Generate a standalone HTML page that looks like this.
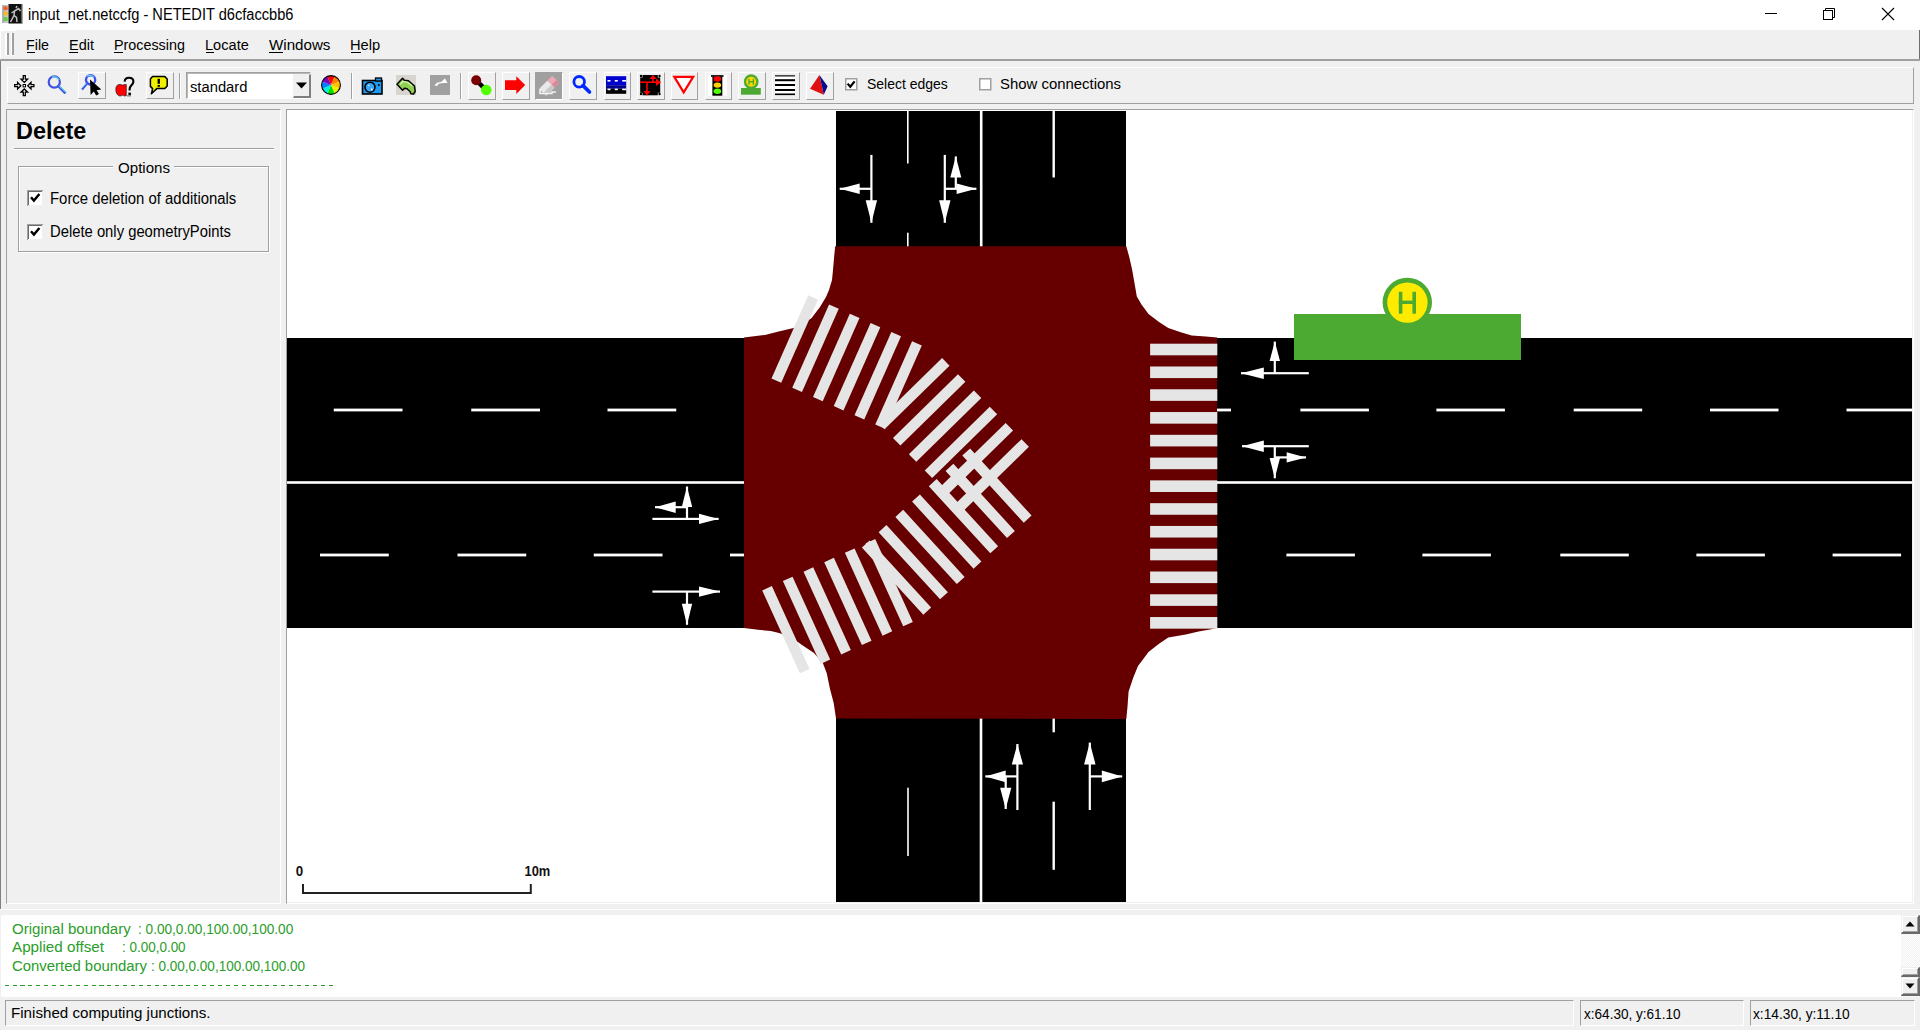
<!DOCTYPE html><html><head><meta charset="utf-8"><style>*{box-sizing:border-box}html,body{margin:0;padding:0}body{width:1920px;height:1030px;overflow:hidden;background:#f0f0f0;position:relative;font-family:"Liberation Sans", sans-serif;color:#000}.a{position:absolute}.t{position:absolute;white-space:pre;line-height:1}</style></head><body><div class="a" style="left:0px;top:0px;width:1920px;height:30px;background:#fff"></div><svg class="a" style="left:2px;top:3px;" width="21" height="21" viewBox="0 0 21 21"><rect x="0.5" y="2" width="6" height="18" fill="#c8c8c8"/><rect x="0.5" y="2" width="1" height="18" fill="#888"/><circle cx="3.6" cy="5.2" r="2.2" fill="#f0602a"/><circle cx="3.6" cy="10.6" r="2.2" fill="#f5b820"/><circle cx="3.6" cy="16" r="2.2" fill="#60d040"/><rect x="6.5" y="1" width="14" height="19.5" fill="#111"/><rect x="19.5" y="1" width="1.5" height="19.5" fill="#aaa"/><path d="M8.5 19 L12 12.5 L14.5 14.5 L15 19 M12 12.5 L12.5 8 L16.5 5.5 L18.5 8 M12.5 8 L9.5 10 M14 5 L15 3" stroke="#c0c0c0" stroke-width="1.5" fill="none"/></svg><div class="t" style="left:27.5px;top:6.59px;font-size:15.6px;height:15.6px;color:#000;font-weight:normal;transform-origin:0 0;transform:scaleX(0.9376);">input_net.netccfg - NETEDIT d6cfaccbb6</div><div class="a" style="left:1765px;top:13px;width:12px;height:1px;background:#000"></div><svg class="a" style="left:1820px;top:5px;" width="18" height="18" viewBox="0 0 18 18"><rect x="3.5" y="5.5" width="9" height="9" fill="none" stroke="#000" stroke-width="1"/><path d="M5.5 5.5 V3.5 H14.5 V12.5 H12.5" fill="none" stroke="#000" stroke-width="1"/></svg><svg class="a" style="left:1879px;top:5px;" width="18" height="18" viewBox="0 0 18 18"><path d="M3 3 L15 15 M15 3 L3 15" stroke="#000" stroke-width="1.1" fill="none"/></svg><div class="a" style="left:0px;top:59px;width:1px;height:850px;background:#808080"></div><div class="a" style="left:0px;top:30px;width:1px;height:29px;background:#fff"></div><div class="a" style="left:0px;top:30px;width:16px;height:1px;background:#fff"></div><div class="a" style="left:1919px;top:30px;width:1px;height:31px;background:#6d6d6d"></div><div class="a" style="left:0px;top:59px;width:1920px;height:2px;background:#a0a0a0"></div><div class="a" style="left:5px;top:33px;width:2px;height:23px;background:#fff"></div><div class="a" style="left:7px;top:33px;width:2px;height:23px;background:#a0a0a0"></div><div class="a" style="left:5px;top:55px;width:4px;height:1px;background:#fff"></div><div class="a" style="left:10.5px;top:33px;width:1.5px;height:23px;background:#fff"></div><div class="a" style="left:12px;top:33px;width:2px;height:23px;background:#a0a0a0"></div><div class="a" style="left:10.5px;top:55px;width:3.5px;height:1px;background:#fff"></div><div class="t" style="left:26px;top:37.12px;font-size:15.1px;height:15.1px;color:#000;font-weight:normal;transform-origin:0 0;transform:scaleX(0.9454);">File</div><div class="a" style="left:26.5px;top:52px;width:8.6px;height:1px;background:#000"></div><div class="t" style="left:68.75px;top:37.12px;font-size:15.1px;height:15.1px;color:#000;font-weight:normal;transform-origin:0 0;transform:scaleX(0.9610);">Edit</div><div class="a" style="left:69.25px;top:52px;width:9px;height:1px;background:#000"></div><div class="t" style="left:113.5px;top:37.12px;font-size:15.1px;height:15.1px;color:#000;font-weight:normal;transform-origin:0 0;transform:scaleX(0.9495);">Processing</div><div class="a" style="left:114px;top:52px;width:9.4px;height:1px;background:#000"></div><div class="t" style="left:205.2px;top:37.12px;font-size:15.1px;height:15.1px;color:#000;font-weight:normal;transform-origin:0 0;transform:scaleX(0.9663);">Locate</div><div class="a" style="left:205.7px;top:52px;width:8px;height:1px;background:#000"></div><div class="t" style="left:268.75px;top:37.12px;font-size:15.1px;height:15.1px;color:#000;font-weight:normal;transform-origin:0 0;transform:scaleX(1.0035);">Windows</div><div class="a" style="left:269.25px;top:52px;width:13.5px;height:1px;background:#000"></div><div class="t" style="left:350px;top:37.12px;font-size:15.1px;height:15.1px;color:#000;font-weight:normal;transform-origin:0 0;transform:scaleX(0.9727);">Help</div><div class="a" style="left:350.5px;top:52px;width:10.3px;height:1px;background:#000"></div><div class="a" style="left:7px;top:67px;width:1907px;height:37px;border-top:1px solid #fff;border-left:1px solid #fff;border-right:1px solid #a0a0a0;border-bottom:1px solid #a0a0a0"></div><svg class="a" style="left:14px;top:75px;" width="21" height="22" viewBox="0 0 21 22"><g fill="#fff" stroke="#000" stroke-width="1.3" stroke-linejoin="miter"><path d="M9.3 0.7 H11.3 V4.2 H13.6 L10.3 7.4 L7 4.2 H9.3 Z"/><path d="M9.3 20.7 H11.3 V17.2 H13.6 L10.3 14 L7 17.2 H9.3 Z"/><path d="M0.7 9.7 V11.7 H3.6 V14 L6.8 10.7 L3.6 7.4 V9.7 Z"/><path d="M19.9 9.7 V11.7 H17 V14 L13.8 10.7 L17 7.4 V9.7 Z"/></g><rect x="9.1" y="9.5" width="2.4" height="2.4" fill="#fff" stroke="#000" stroke-width="1"/></svg><svg class="a" style="left:46px;top:74px;" width="22" height="22" viewBox="0 0 22 22"><circle cx="8.3" cy="8" r="5.6" fill="#eee" stroke="#4050e0" stroke-width="2.2"/><path d="M6 3.2 A5.6 5.6 0 0 1 13 6" stroke="#60c8e8" stroke-width="1.6" fill="none"/><path d="M12.6 12.4 L19.5 19.3" stroke="#4050e0" stroke-width="2.6"/><path d="M13.4 12 L19.6 18.2" stroke="#60d0e8" stroke-width="1.2"/></svg><div class="a" style="left:78.3px;top:72.3px;width:27.5px;height:27.2px;border-top:1px solid #fff;border-left:1px solid #fff;border-right:1px solid #a0a0a0;border-bottom:1px solid #a0a0a0"></div><svg class="a" style="left:80px;top:74px;" width="24" height="24" viewBox="0 0 24 24"><circle cx="10.6" cy="5.9" r="4.6" fill="#f4f4f4" stroke="#4050e8" stroke-width="2.4"/><path d="M7 2.5 A4.6 4.6 0 0 1 14 3.5" stroke="#60c8f0" stroke-width="1.2" fill="none"/><path d="M7 9.6 L2 15.5" stroke="#4050e8" stroke-width="2.2"/><path d="M6.2 9.6 L1.6 14.6" stroke="#60c8f0" stroke-width="1"/><path d="M10 5.4 L10.6 21 L13.8 17.6 L16.2 21.5 L19 20 L16.6 16.2 L21.3 15.6 Z" fill="#000"/></svg><svg class="a" style="left:114px;top:76px;" width="22" height="22" viewBox="0 0 22 22"><path d="M4.5 8.6 C2.6 9.2 1.8 11 1.8 13.6 C1.8 17 3.6 20 6.2 20 C7.4 20 7.8 19.3 8.6 19.3 C9.4 19.3 9.8 20 11 20 C11.8 20 12.3 19.5 12.3 19.5 V8.6 C11.5 8.2 10.6 8.4 9.8 8.8 C9 9.2 8.2 9.2 7.4 8.8 C6.5 8.3 5.5 8.3 4.5 8.6 Z" fill="#f00" stroke="#222" stroke-width="0.7"/><path d="M10.6 5.6 C10.8 3.2 12.6 1.8 15 1.8 C17.6 1.8 19.4 3.4 19.4 5.7 C19.4 8.6 15.6 9.6 15.6 13.2 V14.6" stroke="#000" stroke-width="2.1" fill="none"/><rect x="14.4" y="16.6" width="2.5" height="2.6" fill="#000"/><rect x="13" y="19.4" width="4" height="1" fill="#666"/></svg><div class="a" style="left:145.6px;top:72.3px;width:28px;height:27.2px;border-top:1px solid #fff;border-left:1px solid #fff;border-right:1px solid #a0a0a0;border-bottom:1px solid #a0a0a0"></div><svg class="a" style="left:148px;top:74px;" width="22" height="22" viewBox="0 0 22 22"><path d="M4.5 2.6 H16.8 L19.2 5 V12 L16.8 14.6 H8.8 L3.4 19.8 L4.6 14.6 L2.4 12.4 V5 Z" fill="#f0f000" stroke="#000" stroke-width="1.5" stroke-linejoin="round"/><rect x="9.6" y="4.8" width="2.3" height="5" fill="#000"/><rect x="9.6" y="11" width="2.3" height="1.8" fill="#000"/></svg><div class="a" style="left:178.9px;top:73px;width:1px;height:26px;background:#a0a0a0"></div><div class="a" style="left:179.9px;top:73px;width:1px;height:26px;background:#fff"></div><div class="a" style="left:186px;top:72px;width:125px;height:27px;background:#fff;border-top:1px solid #a0a0a0;border-left:1px solid #a0a0a0;border-bottom:1px solid #fff;border-right:1px solid #fff"></div><div class="a" style="left:187px;top:73px;width:1px;height:25px;background:#b8b8b8"></div><div class="a" style="left:187px;top:73px;width:123px;height:1px;background:#b8b8b8"></div><div class="a" style="left:292.5px;top:73.5px;width:18px;height:24.5px;background:#f0f0f0;border-top:1px solid #f0f0f0;border-left:1px solid #f0f0f0;border-right:2px solid #808080;border-bottom:2px solid #808080"></div><svg class="a" style="left:295px;top:82px;" width="13" height="7" viewBox="0 0 13 7"><path d="M1 0.5 H12 L6.5 6.5 Z" fill="#000"/></svg><div class="t" style="left:189.9px;top:78.63px;font-size:15.2px;height:15.2px;color:#000;font-weight:normal;transform-origin:0 0;transform:scaleX(0.9711);">standard</div><svg class="a" style="left:321px;top:75px;" width="20" height="20" viewBox="0 0 20 20"><path d="M10 10 L6.44 1.41 A9.3 9.3 0 0 1 13.56 1.41 Z" fill="#ff0000"/><path d="M10 10 L13.56 1.41 A9.3 9.3 0 0 1 18.59 6.44 Z" fill="#ff8000"/><path d="M10 10 L18.59 6.44 A9.3 9.3 0 0 1 18.59 13.56 Z" fill="#ffc000"/><path d="M10 10 L18.59 13.56 A9.3 9.3 0 0 1 13.56 18.59 Z" fill="#f0f000"/><path d="M10 10 L13.56 18.59 A9.3 9.3 0 0 1 6.44 18.59 Z" fill="#00e000"/><path d="M10 10 L6.44 18.59 A9.3 9.3 0 0 1 1.41 13.56 Z" fill="#00f0e0"/><path d="M10 10 L1.41 13.56 A9.3 9.3 0 0 1 1.41 6.44 Z" fill="#0080ff"/><path d="M10 10 L1.41 6.44 A9.3 9.3 0 0 1 6.44 1.41 Z" fill="#8000c0"/><circle cx="10" cy="10" r="9.4" fill="none" stroke="#000" stroke-width="1.1"/></svg><div class="a" style="left:351.4px;top:73px;width:1px;height:26px;background:#a0a0a0"></div><div class="a" style="left:352.4px;top:73px;width:1px;height:26px;background:#fff"></div><svg class="a" style="left:361px;top:76px;" width="23" height="20" viewBox="0 0 23 20"><rect x="1.5" y="4.5" width="19.5" height="13.5" fill="#1e9af5" stroke="#000" stroke-width="1.6"/><rect x="14.5" y="2" width="6" height="3" fill="#1e9af5" stroke="#000" stroke-width="1.3"/><circle cx="9" cy="11.2" r="5" fill="#3aa8f8" stroke="#000" stroke-width="1.6"/><circle cx="17.8" cy="9" r="1" fill="#000"/><path d="M7 9 L8.5 10" stroke="#bfe6ff" stroke-width="1.2"/><circle cx="10.8" cy="13.4" r="1" fill="#fff"/></svg><div class="a" style="left:396.2px;top:75.1px;width:20px;height:19.7px;background:#d8d4ce"></div><svg class="a" style="left:396px;top:75px;" width="21" height="20" viewBox="0 0 21 20"><path d="M1 9.3 L6.6 3.3 L8.3 5.3 L12.5 5.7 L18.5 11 L19.2 16.5 L17.5 19 L15 18.7 L14 16.5 L11 13.8 L8.5 13.2 L6.6 15.2 Z" fill="#8fd050" stroke="#000" stroke-width="1.5" stroke-linejoin="round"/><path d="M4 9.3 L7 6.5 L12 7.5 L16 11" stroke="#d8f4b8" stroke-width="1.2" fill="none"/></svg><div class="a" style="left:430.1px;top:75.1px;width:19.7px;height:19.7px;background:#a0a0a0"></div><svg class="a" style="left:430px;top:75px;" width="20" height="20" viewBox="0 0 20 20"><path d="M4.5 10.5 L7 7.8 L11.5 6.8 L13.5 4.8 L15 3.5 L17.5 8 L14 8 L9 8.5 L7 11 Z" fill="#fff"/></svg><div class="a" style="left:460px;top:73px;width:1px;height:26px;background:#a0a0a0"></div><div class="a" style="left:461px;top:73px;width:1px;height:26px;background:#fff"></div><div class="a" style="left:468.3px;top:72.3px;width:27.8px;height:27.4px;border-top:1px solid #fff;border-left:1px solid #fff;border-right:1px solid #a0a0a0;border-bottom:1px solid #a0a0a0"></div><div class="a" style="left:501.9px;top:72.3px;width:27.8px;height:27.4px;border-top:1px solid #fff;border-left:1px solid #fff;border-right:1px solid #a0a0a0;border-bottom:1px solid #a0a0a0"></div><div class="a" style="left:535.3px;top:72.3px;width:28.1px;height:27.4px;background:#a0a0a0;border-top:1px solid #a0a0a0;border-left:1px solid #a0a0a0;border-right:1px solid #fff;border-bottom:1px solid #fff"></div><div class="a" style="left:569.4px;top:72.3px;width:27.8px;height:27.4px;border-top:1px solid #fff;border-left:1px solid #fff;border-right:1px solid #a0a0a0;border-bottom:1px solid #a0a0a0"></div><div class="a" style="left:603.5px;top:72.3px;width:27.8px;height:27.4px;border-top:1px solid #fff;border-left:1px solid #fff;border-right:1px solid #a0a0a0;border-bottom:1px solid #a0a0a0"></div><div class="a" style="left:637.1px;top:72.3px;width:27.8px;height:27.4px;border-top:1px solid #fff;border-left:1px solid #fff;border-right:1px solid #a0a0a0;border-bottom:1px solid #a0a0a0"></div><div class="a" style="left:670.7px;top:72.3px;width:27.8px;height:27.4px;border-top:1px solid #fff;border-left:1px solid #fff;border-right:1px solid #a0a0a0;border-bottom:1px solid #a0a0a0"></div><div class="a" style="left:704.5px;top:72.3px;width:27.8px;height:27.4px;border-top:1px solid #fff;border-left:1px solid #fff;border-right:1px solid #a0a0a0;border-bottom:1px solid #a0a0a0"></div><div class="a" style="left:738.4px;top:72.3px;width:27.8px;height:27.4px;border-top:1px solid #fff;border-left:1px solid #fff;border-right:1px solid #a0a0a0;border-bottom:1px solid #a0a0a0"></div><div class="a" style="left:772.3px;top:72.3px;width:27.8px;height:27.4px;border-top:1px solid #fff;border-left:1px solid #fff;border-right:1px solid #a0a0a0;border-bottom:1px solid #a0a0a0"></div><div class="a" style="left:806.1px;top:72.3px;width:27.8px;height:27.4px;border-top:1px solid #fff;border-left:1px solid #fff;border-right:1px solid #a0a0a0;border-bottom:1px solid #a0a0a0"></div><svg class="a" style="left:470px;top:74px;" width="24" height="24" viewBox="0 0 24 24"><path d="M6.5 6.5 L16 16" stroke="#000" stroke-width="4.5"/><circle cx="6.2" cy="6.2" r="5" fill="#780000"/><circle cx="16.3" cy="16" r="5.3" fill="#50ff00"/></svg><svg class="a" style="left:504px;top:75px;" width="23" height="20" viewBox="0 0 23 20"><path d="M1 5.2 H12.3 V1.2 L21.2 10.1 L12.3 19 V15 H1 Z" fill="#f00"/></svg><svg class="a" style="left:537px;top:74px;" width="24" height="24" viewBox="0 0 24 24"><g transform="rotate(-45 12 12)"><rect x="3" y="7" width="12" height="10" rx="1.5" fill="#e8e8e8"/><rect x="3" y="13" width="12" height="4" fill="#c8c8c8"/><rect x="15" y="7" width="6.5" height="10" rx="1" fill="#eea8b8"/><rect x="15" y="13" width="6.5" height="4" fill="#d88898"/></g><path d="M3 15 V19.5 H15 V18 H19" stroke="#f4f4f4" stroke-width="1.6" fill="none"/></svg><svg class="a" style="left:571px;top:74px;" width="22" height="22" viewBox="0 0 22 22"><circle cx="8.2" cy="7.8" r="5.3" fill="none" stroke="#0028ff" stroke-width="2.8"/><path d="M12 11.6 L18.5 18" stroke="#0028ff" stroke-width="3.6" stroke-linecap="round"/></svg><svg class="a" style="left:605px;top:75px;" width="23" height="20" viewBox="0 0 23 20"><rect x="1" y="1.2" width="20.2" height="9" fill="#0000d0"/><rect x="1" y="10.2" width="20.2" height="3.6" fill="#000090"/><rect x="1" y="13.8" width="20.2" height="5" fill="#000"/><g fill="#fff"><rect x="2.5" y="5" width="3" height="1.6"/><rect x="9.8" y="5" width="3" height="1.6"/><rect x="17.2" y="5" width="4" height="1.6"/><rect x="2.5" y="13.6" width="3" height="1.6"/><rect x="9.8" y="13.6" width="3" height="1.6"/><rect x="17.2" y="13.6" width="4" height="1.6"/></g></svg><svg class="a" style="left:639px;top:74px;" width="24" height="23" viewBox="0 0 24 23"><rect x="1.2" y="1" width="20" height="20.3" fill="#000"/><g fill="#f0f0f0"><rect x="0" y="0" width="3.5" height="3.5"/><rect x="18.8" y="0" width="4" height="3.5"/><rect x="0" y="18.8" width="3.5" height="4"/><rect x="18.8" y="18.8" width="4" height="4"/></g><g fill="#000"><circle cx="2" cy="2" r="1.2"/><circle cx="20.5" cy="2" r="1.2"/><circle cx="2" cy="20" r="1.2"/><circle cx="20.5" cy="20" r="1.2"/></g><g stroke="#f00" stroke-width="1.6" fill="#f00"><path d="M1 8.2 H18" fill="none"/><path d="M8 8.2 V18" fill="none"/><path d="M14 8.2 V4" fill="none"/></g><g fill="#f00"><path d="M17 4.5 L22 8.2 L17 12 Z"/><path d="M4.5 17 L8 21.5 L11.5 17 Z"/><path d="M10.5 5 L14 0.8 L17.5 5 Z"/></g></svg><svg class="a" style="left:672px;top:75px;" width="24" height="20" viewBox="0 0 24 20"><path d="M2.3 1.8 H21.2 L11.7 17.4 Z" fill="#fff" stroke="#f00" stroke-width="2.2" stroke-linejoin="miter"/></svg><svg class="a" style="left:706px;top:74px;" width="24" height="24" viewBox="0 0 24 24"><rect x="1.7" y="1" width="19.3" height="20.7" fill="#fff"/><rect x="6.4" y="1.3" width="9.9" height="20.4" fill="#000"/><rect x="5" y="1" width="12.5" height="2" fill="#222"/><ellipse cx="11.4" cy="5" rx="3.8" ry="2.7" fill="#f00"/><ellipse cx="11.4" cy="11.1" rx="3.8" ry="2.7" fill="#ffd000"/><ellipse cx="11.4" cy="17.3" rx="3.8" ry="2.7" fill="#50ff00"/></svg><svg class="a" style="left:740px;top:74px;" width="22" height="22" viewBox="0 0 22 22"><rect x="1" y="14" width="19.8" height="6.7" fill="#4caa32"/><circle cx="11.2" cy="7.7" r="7.4" fill="#4caa32"/><circle cx="11.2" cy="7.7" r="5" fill="#ffd800"/><path d="M9 4.8 V10.8 M13.4 4.8 V10.8 M9 7.8 H13.4" stroke="#4caa32" stroke-width="1.4"/></svg><svg class="a" style="left:774px;top:74px;" width="23" height="23" viewBox="0 0 23 23"><rect x="1" y="1" width="20" height="20" fill="#fff"/><g fill="#000"><rect x="1" y="1" width="20" height="1.6" fill="#444"/><rect x="1" y="5.2" width="20" height="2"/><rect x="1" y="10" width="20" height="2"/><rect x="1" y="15" width="20" height="2"/><rect x="1" y="19.5" width="20" height="1.6"/></g></svg><svg class="a" style="left:808px;top:74px;" width="22" height="22" viewBox="0 0 22 22"><path d="M11.4 1 L2 14.7 L15.8 20.7 Z" fill="#e01010"/><path d="M11.4 1 L19.6 12.3 L15.8 20.7 Z" fill="#0a0a8c"/></svg><svg class="a" style="left:845px;top:78px;" width="13" height="13" viewBox="0 0 13 13"><rect x="0.75" y="0.75" width="11" height="11" fill="#fff" stroke="#a0a0a0" stroke-width="1.5"/><path d="M2.6 5.6 L5.3 8.8 L9.6 3.4" stroke="#000" stroke-width="2.2" fill="none"/></svg><div class="t" style="left:866.5px;top:76.89px;font-size:14.9px;height:14.9px;color:#000;font-weight:normal;transform-origin:0 0;transform:scaleX(0.9378);">Select edges</div><svg class="a" style="left:979px;top:78px;" width="13" height="13" viewBox="0 0 13 13"><rect x="0.75" y="0.75" width="11" height="11" fill="#fff" stroke="#a0a0a0" stroke-width="1.5"/></svg><div class="t" style="left:1000px;top:76.89px;font-size:14.9px;height:14.9px;color:#000;font-weight:normal;transform-origin:0 0;transform:scaleX(1.0012);">Show connections</div><div class="a" style="left:6px;top:109px;width:275px;height:795px;border-top:1px solid #a0a0a0;border-left:1px solid #a0a0a0;border-right:1px solid #fff;border-bottom:1px solid #fff"></div><div class="t" style="left:15.8px;top:119.26px;font-size:24.5px;height:24.5px;color:#000;font-weight:bold;transform-origin:0 0;transform:scaleX(0.9572);">Delete</div><div class="a" style="left:14px;top:148px;width:260px;height:1px;background:#a0a0a0"></div><div class="a" style="left:14px;top:149px;width:260px;height:1px;background:#fff"></div><div class="a" style="left:18px;top:166px;width:251px;height:86px;border:1px solid #a0a0a0;box-shadow:inset 1px 1px 0 #fff, 1px 1px 0 #fff"></div><div class="a" style="left:113px;top:158px;width:61px;height:14px;background:#f0f0f0"></div><div class="t" style="left:118px;top:159.73px;font-size:15.2px;height:15.2px;color:#000;font-weight:normal;transform-origin:0 0;transform:scaleX(0.9934);">Options</div><svg class="a" style="left:27.3px;top:190.1px;" width="16" height="16" viewBox="0 0 16 16"><rect x="0" y="0" width="16" height="16" fill="#fff"/><rect x="0" y="0" width="16" height="1" fill="#a0a0a0"/><rect x="0" y="0" width="1" height="16" fill="#a0a0a0"/><rect x="1" y="1" width="14" height="1" fill="#696969"/><rect x="1" y="1" width="1" height="14" fill="#696969"/><rect x="15" y="1" width="1" height="15" fill="#f0f0f0"/><rect x="1" y="15" width="15" height="1" fill="#f0f0f0"/><path d="M4 7.2 L6.9 10.6 L12.4 4" stroke="#000" stroke-width="2.4" fill="none"/></svg><div class="t" style="left:49.7px;top:190.59px;font-size:15.6px;height:15.6px;color:#000;font-weight:normal;transform-origin:0 0;transform:scaleX(0.9552);">Force deletion of additionals</div><svg class="a" style="left:27.3px;top:224.2px;" width="16" height="16" viewBox="0 0 16 16"><rect x="0" y="0" width="16" height="16" fill="#fff"/><rect x="0" y="0" width="16" height="1" fill="#a0a0a0"/><rect x="0" y="0" width="1" height="16" fill="#a0a0a0"/><rect x="1" y="1" width="14" height="1" fill="#696969"/><rect x="1" y="1" width="1" height="14" fill="#696969"/><rect x="15" y="1" width="1" height="15" fill="#f0f0f0"/><rect x="1" y="15" width="15" height="1" fill="#f0f0f0"/><path d="M4 7.2 L6.9 10.6 L12.4 4" stroke="#000" stroke-width="2.4" fill="none"/></svg><div class="t" style="left:49.7px;top:224.39px;font-size:15.6px;height:15.6px;color:#000;font-weight:normal;transform-origin:0 0;transform:scaleX(0.9491);">Delete only geometryPoints</div><div class="a" style="left:286px;top:109px;width:1628px;height:795px;border-top:1px solid #a0a0a0;border-left:1px solid #a0a0a0;border-right:1px solid #fff;border-bottom:1px solid #fff"></div><div class="a" style="left:287px;top:110px;width:1625px;height:792px;background:#fff;overflow:hidden"><svg width="1625" height="792" viewBox="287 110 1625 792" style="position:absolute;left:0;top:0;display:block"><rect x="287" y="338" width="459" height="290" fill="#000" shape-rendering="crispEdges"/><rect x="1215" y="338" width="697" height="290" fill="#000" shape-rendering="crispEdges"/><rect x="836" y="111" width="290" height="137" fill="#000" shape-rendering="crispEdges"/><rect x="836" y="717" width="290" height="185" fill="#000" shape-rendering="crispEdges"/><polygon points="836,246.3 1126.3,246.3 1129.2,256.8 1132.1,269.6 1135,286 1136.8,296.4 1141.5,304.6 1148.5,313.9 1159,322 1168.3,327.9 1180,332 1191.6,335.5 1205.6,336.6 1217.2,337.6 1217.2,627.8 1211.4,629.2 1198.6,631.6 1185.8,634.5 1168.3,637.4 1159,643.8 1148.5,652 1138,666 1133.3,677.6 1128.6,691.6 1127.5,706.7 1126.3,719 836,718.6 833.7,703 830,689 826.7,673 823,663.6 814,653 802,645 795,640 780,633.3 770.8,631 758,629.8 744,628 744,337.6 765,335 776.6,332 793.5,328 806,322 811.6,318 820,307 823,302 826,297 829,290 832,280 833,270 834.3,255 835.2,246.3" fill="#660000" /><polygon points="771.49,378.56 781.19,382.85 818,299.63 808.31,295.34" fill="#e5e5e5" /><polygon points="792.25,387.74 801.95,392.03 838.76,308.81 829.07,304.52" fill="#e5e5e5" /><polygon points="813.01,396.93 822.71,401.22 859.52,317.99 849.83,313.71" fill="#e5e5e5" /><polygon points="833.77,406.11 843.47,410.4 880.28,327.18 870.59,322.89" fill="#e5e5e5" /><polygon points="854.53,415.29 864.23,419.58 901.04,336.36 891.35,332.07" fill="#e5e5e5" /><polygon points="875.29,424.48 884.99,428.76 921.8,345.54 912.1,341.26" fill="#e5e5e5" /><polygon points="877.09,421.74 884.51,429.31 949.52,365.63 942.11,358.06" fill="#e5e5e5" /><polygon points="892.98,437.95 900.4,445.53 965.41,381.85 957.99,374.28" fill="#e5e5e5" /><polygon points="908.86,454.17 916.28,461.74 981.29,398.07 973.87,390.5" fill="#e5e5e5" /><polygon points="924.75,470.39 932.16,477.96 997.17,414.28 989.76,406.71" fill="#e5e5e5" /><polygon points="940.63,486.61 948.05,494.18 1013.06,430.5 1005.64,422.93" fill="#e5e5e5" /><polygon points="956.52,502.82 963.93,510.39 1028.94,446.72 1021.53,439.15" fill="#e5e5e5" /><polygon points="799.88,673.27 809.53,668.89 771.87,586.04 762.22,590.43" fill="#e5e5e5" /><polygon points="820.54,663.88 830.19,659.49 792.54,576.65 782.89,581.04" fill="#e5e5e5" /><polygon points="841.21,654.49 850.86,650.1 813.2,567.26 803.55,571.64" fill="#e5e5e5" /><polygon points="861.87,645.09 871.52,640.71 833.87,557.86 824.22,562.25" fill="#e5e5e5" /><polygon points="882.54,635.7 892.19,631.32 854.54,548.47 844.89,552.86" fill="#e5e5e5" /><polygon points="903.2,626.31 912.85,621.92 875.2,539.08 865.55,543.46" fill="#e5e5e5" /><polygon points="923.33,614.7 931.15,607.54 869.68,540.44 861.87,547.6" fill="#e5e5e5" /><polygon points="940.07,599.37 947.89,592.21 886.42,525.11 878.61,532.27" fill="#e5e5e5" /><polygon points="956.81,584.04 964.63,576.88 903.16,509.77 895.35,516.93" fill="#e5e5e5" /><polygon points="973.55,568.7 981.37,561.54 919.9,494.44 912.08,501.6" fill="#e5e5e5" /><polygon points="990.29,553.37 998.11,546.21 936.64,479.11 928.82,486.27" fill="#e5e5e5" /><polygon points="1007.03,538.04 1014.85,530.88 953.38,463.78 945.56,470.93" fill="#e5e5e5" /><polygon points="1023.77,522.71 1031.58,515.55 970.12,448.44 962.3,455.6" fill="#e5e5e5" /><rect x="1150.1" y="343.7" width="67.2" height="11.6" fill="#e5e5e5" /><rect x="1150.1" y="366.48" width="67.2" height="11.6" fill="#e5e5e5" /><rect x="1150.1" y="389.26" width="67.2" height="11.6" fill="#e5e5e5" /><rect x="1150.1" y="412.04" width="67.2" height="11.6" fill="#e5e5e5" /><rect x="1150.1" y="434.82" width="67.2" height="11.6" fill="#e5e5e5" /><rect x="1150.1" y="457.6" width="67.2" height="11.6" fill="#e5e5e5" /><rect x="1150.1" y="480.38" width="67.2" height="11.6" fill="#e5e5e5" /><rect x="1150.1" y="503.16" width="67.2" height="11.6" fill="#e5e5e5" /><rect x="1150.1" y="525.94" width="67.2" height="11.6" fill="#e5e5e5" /><rect x="1150.1" y="548.72" width="67.2" height="11.6" fill="#e5e5e5" /><rect x="1150.1" y="571.5" width="67.2" height="11.6" fill="#e5e5e5" /><rect x="1150.1" y="594.28" width="67.2" height="11.6" fill="#e5e5e5" /><rect x="1150.1" y="617.06" width="67.2" height="11.6" fill="#e5e5e5" /><rect x="287" y="481.2" width="457" height="2.6" fill="#fff" /><rect x="333.75" y="408.6" width="68.75" height="2.8" fill="#fff" /><rect x="471.25" y="408.6" width="68.75" height="2.8" fill="#fff" /><rect x="607.5" y="408.6" width="68.75" height="2.8" fill="#fff" /><rect x="320" y="553.6" width="68.75" height="2.8" fill="#fff" /><rect x="457.5" y="553.6" width="68.75" height="2.8" fill="#fff" /><rect x="593.75" y="553.6" width="68.75" height="2.8" fill="#fff" /><rect x="730" y="553.6" width="14" height="2.8" fill="#fff" /><rect x="1217" y="481.2" width="695" height="2.6" fill="#fff" /><rect x="1217" y="408.6" width="14" height="2.8" fill="#fff" /><rect x="1300.4" y="408.6" width="68.5" height="2.8" fill="#fff" /><rect x="1436.4" y="408.6" width="68.5" height="2.8" fill="#fff" /><rect x="1573.7" y="408.6" width="68.5" height="2.8" fill="#fff" /><rect x="1710" y="408.6" width="68.5" height="2.8" fill="#fff" /><rect x="1846.5" y="408.6" width="65.5" height="2.8" fill="#fff" /><rect x="1286.4" y="553.6" width="68.5" height="2.8" fill="#fff" /><rect x="1422.4" y="553.6" width="68.5" height="2.8" fill="#fff" /><rect x="1560.3" y="553.6" width="68.5" height="2.8" fill="#fff" /><rect x="1696.4" y="553.6" width="68.5" height="2.8" fill="#fff" /><rect x="1832.6" y="553.6" width="68.5" height="2.8" fill="#fff" /><rect x="979.9" y="111" width="2.6" height="135.3" fill="#fff" /><rect x="907" y="111" width="1.6" height="52.5" fill="#fff" /><rect x="907" y="232.7" width="1.6" height="13.6" fill="#fff" /><rect x="1052.5" y="111" width="2.4" height="66.5" fill="#fff" /><rect x="979.7" y="718.6" width="2.6" height="183.4" fill="#fff" /><rect x="907.2" y="787.7" width="1.6" height="68.3" fill="#fff" /><rect x="1052.5" y="718.6" width="2.4" height="13.7" fill="#fff" /><rect x="1052.5" y="801.7" width="2.4" height="68.1" fill="#fff" /><rect x="652.4" y="517.8" width="66.2" height="2.2" fill="#fff" /><polygon points="718.6,518.9 699,513.7 699,524.1" fill="#fff" /><rect x="685.9" y="486.5" width="2.2" height="32.4" fill="#fff" /><polygon points="687,486.5 681.8,507 692.2,507" fill="#fff" /><rect x="655" y="506.1" width="32" height="2.2" fill="#fff" /><polygon points="655,507.2 675.7,501.4 675.7,513" fill="#fff" /><rect x="652.4" y="590.5" width="67.6" height="2.2" fill="#fff" /><polygon points="720,591.6 699,586.4 699,596.8" fill="#fff" /><rect x="685.9" y="591.6" width="2.2" height="33.2" fill="#fff" /><polygon points="687,624.8 681.8,603.7 692.2,603.7" fill="#fff" /><rect x="1241" y="372.1" width="67.8" height="2.2" fill="#fff" /><polygon points="1241,373.2 1263.8,367.4 1263.8,379" fill="#fff" /><rect x="1273.7" y="341.6" width="2.2" height="31.6" fill="#fff" /><polygon points="1274.8,341.6 1269.6,361 1280,361" fill="#fff" /><rect x="1242" y="445.1" width="66.8" height="2.2" fill="#fff" /><polygon points="1242,446.2 1263.8,440.4 1263.8,452" fill="#fff" /><rect x="1273.7" y="446.2" width="2.2" height="32.1" fill="#fff" /><polygon points="1274.8,478.3 1269.6,458 1280,458" fill="#fff" /><rect x="1274.8" y="456.3" width="31.2" height="2.2" fill="#fff" /><polygon points="1306,457.4 1286.7,452.2 1286.7,462.6" fill="#fff" /><rect x="870.3" y="154.9" width="2.2" height="67.9" fill="#fff" /><polygon points="871.4,222.8 865.7,200.2 877.1,200.2" fill="#fff" /><rect x="839.7" y="187.7" width="31.7" height="2.2" fill="#fff" /><polygon points="839.7,188.8 859.7,183.6 859.7,194" fill="#fff" /><rect x="943.7" y="154.9" width="2.2" height="67.9" fill="#fff" /><polygon points="944.8,222.8 939.1,200.2 950.5,200.2" fill="#fff" /><rect x="944.8" y="187.7" width="31.6" height="2.2" fill="#fff" /><polygon points="976.4,188.8 956.6,183.6 956.6,194" fill="#fff" /><rect x="954.7" y="156.4" width="2.2" height="32.4" fill="#fff" /><polygon points="955.8,156.4 950.3,177.5 961.3,177.5" fill="#fff" /><rect x="1016.3" y="744" width="2.2" height="66" fill="#fff" /><polygon points="1017.4,744 1011.8,764.4 1023,764.4" fill="#fff" /><rect x="985.3" y="775.3" width="32.1" height="2.2" fill="#fff" /><polygon points="985.3,776.4 1005.7,770.6 1005.7,782.2" fill="#fff" /><rect x="1004.6" y="776.4" width="2.2" height="32.6" fill="#fff" /><polygon points="1005.7,809 1000.1,787.7 1011.3,787.7" fill="#fff" /><rect x="1088.7" y="742.6" width="2.2" height="67.4" fill="#fff" /><polygon points="1089.8,742.6 1084.1,764.4 1095.5,764.4" fill="#fff" /><rect x="1089.8" y="775.3" width="32.4" height="2.2" fill="#fff" /><polygon points="1122.2,776.4 1101.8,770.6 1101.8,782.2" fill="#fff" /><rect x="1293.9" y="314.1" width="227.1" height="45.5" fill="#4caa32" shape-rendering="crispEdges"/><circle cx="1407.3" cy="302.4" r="24.7" fill="#4caa32"/><circle cx="1407.4" cy="302.6" r="20.2" fill="#ffeb00"/><rect x="1398.8" y="291.8" width="3.6" height="21.9" fill="#4caa32" /><rect x="1412.4" y="291.8" width="3.6" height="21.9" fill="#4caa32" /><rect x="1398.8" y="300.6" width="17.2" height="3.4" fill="#4caa32" /><path d="M303 884 V893 H530.8 V884" fill="none" stroke="#222" stroke-width="2"/><text x="295.8" y="876.2" font-family='"Liberation Sans"' font-weight="bold" font-size="14" fill="#111" transform="translate(295.8 876.2) scale(0.95 1) translate(-295.8 -876.2)">0</text><text x="524.5" y="876.2" font-family='"Liberation Sans"' font-weight="bold" font-size="14" fill="#111" transform="translate(524.5 876.2) scale(0.92 1) translate(-524.5 -876.2)">10m</text></svg></div><div class="a" style="left:0px;top:909px;width:1920px;height:1px;background:#fff"></div><div class="a" style="left:1px;top:915px;width:1900px;height:82px;background:#fff"></div><div class="t" style="left:11.7px;top:920.53px;font-size:15.2px;height:15.2px;color:#2a9d2a;font-weight:normal;transform-origin:0 0;transform:scaleX(0.9901);">Original boundary</div><div class="t" style="left:137.6px;top:920.53px;font-size:15.2px;height:15.2px;color:#2a9d2a;font-weight:normal;transform-origin:0 0;transform:scaleX(0.8965);">: 0.00,0.00,100.00,100.00</div><div class="t" style="left:11.7px;top:939.33px;font-size:15.2px;height:15.2px;color:#2a9d2a;font-weight:normal;transform-origin:0 0;transform:scaleX(1.0026);">Applied offset</div><div class="t" style="left:121.8px;top:939.33px;font-size:15.2px;height:15.2px;color:#2a9d2a;font-weight:normal;transform-origin:0 0;transform:scaleX(0.8860);">: 0.00,0.00</div><div class="t" style="left:11.7px;top:958.03px;font-size:15.2px;height:15.2px;color:#2a9d2a;font-weight:normal;transform-origin:0 0;transform:scaleX(0.9809);">Converted boundary</div><div class="t" style="left:150.5px;top:958.03px;font-size:15.2px;height:15.2px;color:#2a9d2a;font-weight:normal;transform-origin:0 0;transform:scaleX(0.8901);">: 0.00,0.00,100.00,100.00</div><div class="a" style="left:4.6px;top:985px;width:4.2px;height:1.3px;background:#2a9d2a"></div><div class="a" style="left:12.5px;top:985px;width:4.2px;height:1.3px;background:#2a9d2a"></div><div class="a" style="left:20.4px;top:985px;width:4.2px;height:1.3px;background:#2a9d2a"></div><div class="a" style="left:28.3px;top:985px;width:4.2px;height:1.3px;background:#2a9d2a"></div><div class="a" style="left:36.2px;top:985px;width:4.2px;height:1.3px;background:#2a9d2a"></div><div class="a" style="left:44.1px;top:985px;width:4.2px;height:1.3px;background:#2a9d2a"></div><div class="a" style="left:52px;top:985px;width:4.2px;height:1.3px;background:#2a9d2a"></div><div class="a" style="left:59.9px;top:985px;width:4.2px;height:1.3px;background:#2a9d2a"></div><div class="a" style="left:67.8px;top:985px;width:4.2px;height:1.3px;background:#2a9d2a"></div><div class="a" style="left:75.7px;top:985px;width:4.2px;height:1.3px;background:#2a9d2a"></div><div class="a" style="left:83.6px;top:985px;width:4.2px;height:1.3px;background:#2a9d2a"></div><div class="a" style="left:91.5px;top:985px;width:4.2px;height:1.3px;background:#2a9d2a"></div><div class="a" style="left:99.4px;top:985px;width:4.2px;height:1.3px;background:#2a9d2a"></div><div class="a" style="left:107.3px;top:985px;width:4.2px;height:1.3px;background:#2a9d2a"></div><div class="a" style="left:115.2px;top:985px;width:4.2px;height:1.3px;background:#2a9d2a"></div><div class="a" style="left:123.1px;top:985px;width:4.2px;height:1.3px;background:#2a9d2a"></div><div class="a" style="left:131px;top:985px;width:4.2px;height:1.3px;background:#2a9d2a"></div><div class="a" style="left:138.9px;top:985px;width:4.2px;height:1.3px;background:#2a9d2a"></div><div class="a" style="left:146.8px;top:985px;width:4.2px;height:1.3px;background:#2a9d2a"></div><div class="a" style="left:154.7px;top:985px;width:4.2px;height:1.3px;background:#2a9d2a"></div><div class="a" style="left:162.6px;top:985px;width:4.2px;height:1.3px;background:#2a9d2a"></div><div class="a" style="left:170.5px;top:985px;width:4.2px;height:1.3px;background:#2a9d2a"></div><div class="a" style="left:178.4px;top:985px;width:4.2px;height:1.3px;background:#2a9d2a"></div><div class="a" style="left:186.3px;top:985px;width:4.2px;height:1.3px;background:#2a9d2a"></div><div class="a" style="left:194.2px;top:985px;width:4.2px;height:1.3px;background:#2a9d2a"></div><div class="a" style="left:202.1px;top:985px;width:4.2px;height:1.3px;background:#2a9d2a"></div><div class="a" style="left:210px;top:985px;width:4.2px;height:1.3px;background:#2a9d2a"></div><div class="a" style="left:217.9px;top:985px;width:4.2px;height:1.3px;background:#2a9d2a"></div><div class="a" style="left:225.8px;top:985px;width:4.2px;height:1.3px;background:#2a9d2a"></div><div class="a" style="left:233.7px;top:985px;width:4.2px;height:1.3px;background:#2a9d2a"></div><div class="a" style="left:241.6px;top:985px;width:4.2px;height:1.3px;background:#2a9d2a"></div><div class="a" style="left:249.5px;top:985px;width:4.2px;height:1.3px;background:#2a9d2a"></div><div class="a" style="left:257.4px;top:985px;width:4.2px;height:1.3px;background:#2a9d2a"></div><div class="a" style="left:265.3px;top:985px;width:4.2px;height:1.3px;background:#2a9d2a"></div><div class="a" style="left:273.2px;top:985px;width:4.2px;height:1.3px;background:#2a9d2a"></div><div class="a" style="left:281.1px;top:985px;width:4.2px;height:1.3px;background:#2a9d2a"></div><div class="a" style="left:289px;top:985px;width:4.2px;height:1.3px;background:#2a9d2a"></div><div class="a" style="left:296.9px;top:985px;width:4.2px;height:1.3px;background:#2a9d2a"></div><div class="a" style="left:304.8px;top:985px;width:4.2px;height:1.3px;background:#2a9d2a"></div><div class="a" style="left:312.7px;top:985px;width:4.2px;height:1.3px;background:#2a9d2a"></div><div class="a" style="left:320.6px;top:985px;width:4.2px;height:1.3px;background:#2a9d2a"></div><div class="a" style="left:328.5px;top:985px;width:4.2px;height:1.3px;background:#2a9d2a"></div><div class="a" style="left:1901px;top:915px;width:19px;height:82px;background:repeating-conic-gradient(#f0f0f0 0% 25%, #ffffff 0% 50%) 0 0/2px 2px"></div><div class="a" style="left:1901px;top:915px;width:19px;height:19px;background:#f0f0f0;border-top:1px solid #f0f0f0;border-left:1px solid #f0f0f0;border-right:2px solid #696969;border-bottom:2px solid #696969;box-shadow:inset 1px 1px 0 #fff, inset -1px -1px 0 #a0a0a0"></div><svg class="a" style="left:1904px;top:919px;" width="12" height="10" viewBox="0 0 12 10"><path d="M1.5 7.5 L6 2.5 L10.5 7.5 Z" fill="#000"/></svg><div class="a" style="left:1901px;top:967px;width:19px;height:10px;background:#f0f0f0;border-top:1px solid #f0f0f0;border-left:1px solid #f0f0f0;border-right:2px solid #696969;border-bottom:2px solid #696969;box-shadow:inset 1px 1px 0 #fff, inset -1px -1px 0 #a0a0a0"></div><div class="a" style="left:1901px;top:977px;width:19px;height:19px;background:#f0f0f0;border-top:1px solid #f0f0f0;border-left:1px solid #f0f0f0;border-right:2px solid #696969;border-bottom:2px solid #696969;box-shadow:inset 1px 1px 0 #fff, inset -1px -1px 0 #a0a0a0"></div><svg class="a" style="left:1904px;top:981px;" width="12" height="10" viewBox="0 0 12 10"><path d="M1.5 2.5 L6 7.5 L10.5 2.5 Z" fill="#000"/></svg><div class="a" style="left:5px;top:1000px;width:1569px;height:26px;border-top:1px solid #a0a0a0;border-left:1px solid #a0a0a0;border-right:1px solid #fff;border-bottom:1px solid #fff;"></div><div class="t" style="left:10.5px;top:1005.43px;font-size:15.2px;height:15.2px;color:#000;font-weight:normal;transform-origin:0 0;transform:scaleX(0.9971);">Finished computing junctions.</div><div class="a" style="left:1580px;top:1000px;width:164px;height:26px;border-top:1px solid #a0a0a0;border-left:1px solid #a0a0a0;border-right:1px solid #fff;border-bottom:1px solid #fff;"></div><div class="t" style="left:1583.5px;top:1005.53px;font-size:15.2px;height:15.2px;color:#000;font-weight:normal;transform-origin:0 0;transform:scaleX(0.8929);">x:64.30, y:61.10</div><div class="a" style="left:1750px;top:1000px;width:165px;height:26px;border-top:1px solid #a0a0a0;border-left:1px solid #a0a0a0;border-right:1px solid #fff;border-bottom:1px solid #fff;"></div><div class="t" style="left:1753.2px;top:1005.53px;font-size:15.2px;height:15.2px;color:#000;font-weight:normal;transform-origin:0 0;transform:scaleX(0.9041);">x:14.30, y:11.10</div></body></html>
